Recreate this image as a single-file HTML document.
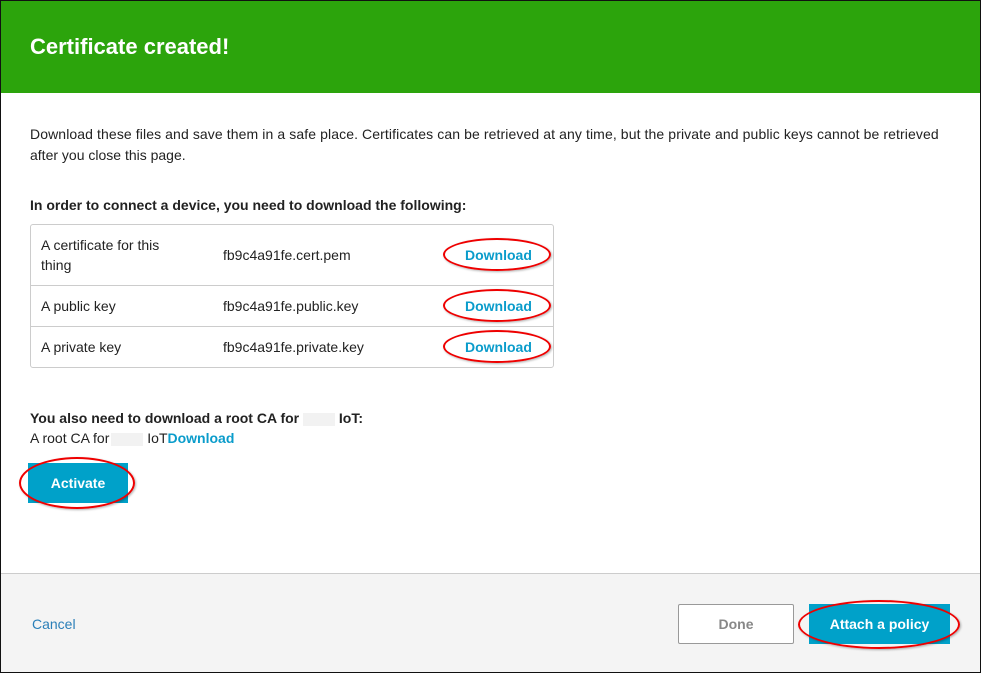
<!DOCTYPE html>
<html><head><style>
*{margin:0;padding:0;box-sizing:border-box}
body{width:981px;height:673px;position:relative;background:#fff;font-family:"Liberation Sans",sans-serif;color:#222;overflow:hidden}
.frame{position:absolute;left:0;top:0;width:981px;height:673px;border:1px solid #111}
.hdr{position:absolute;left:1px;top:1px;width:979px;height:92px;background:#2ca40c}
.hdr h1{position:absolute;left:29px;top:33px;font-size:22px;font-weight:bold;color:#fff}
.a{position:absolute;font-size:14px;white-space:nowrap}
.b{font-weight:bold}
.tbl{position:absolute;left:30px;top:224px;width:524px;height:144px;border:1px solid #ccc;border-radius:3px}
.ln{position:absolute;left:31px;width:522px;height:1px;background:#ccc}
.dl{color:#0a9ccb;font-weight:bold}
.ell{position:absolute;border:2px solid #e00;border-radius:50%;box-shadow:1px 1px 2px rgba(0,0,0,.3)}
.btn{position:absolute;background:#00a1c9;color:#fff;font-weight:bold;font-size:14px;text-align:center}
.foot{position:absolute;left:1px;top:573px;width:979px;height:99px;background:#f4f4f4;border-top:1px solid #ccc}
</style></head><body>
<div class="hdr"><h1>Certificate created!</h1></div>
<div class="a" style="left:30px;top:126px;letter-spacing:0.1px">Download these files and save them in a safe place. Certificates can be retrieved at any time, but the private and public keys cannot be retrieved</div>
<div class="a" style="left:30px;top:147px">after you close this page.</div>
<div class="a b" style="left:30px;top:197px">In order to connect a device, you need to download the following:</div>
<div class="tbl"></div>
<div class="ln" style="top:285px"></div>
<div class="ln" style="top:326px"></div>
<div class="a" style="left:41px;top:237px">A certificate for this</div>
<div class="a" style="left:41px;top:257px">thing</div>
<div class="a" style="left:223px;top:247px">fb9c4a91fe.cert.pem</div>
<div class="a dl" style="left:465px;top:247px">Download</div>
<div class="a" style="left:41px;top:298px">A public key</div>
<div class="a" style="left:223px;top:298px">fb9c4a91fe.public.key</div>
<div class="a dl" style="left:465px;top:298px">Download</div>
<div class="a" style="left:41px;top:339px">A private key</div>
<div class="a" style="left:223px;top:339px">fb9c4a91fe.private.key</div>
<div class="a dl" style="left:465px;top:339px">Download</div>
<div class="ell" style="left:443px;top:238px;width:108px;height:33px"></div>
<div class="ell" style="left:443px;top:289px;width:108px;height:33px"></div>
<div class="ell" style="left:443px;top:330px;width:108px;height:33px"></div>
<div class="a b" style="left:30px;top:410px">You also need to download a root CA for <span style="display:inline-block;width:32px;height:13px;background:#f2f2f2;vertical-align:middle"></span> IoT:</div>
<div class="a" style="left:30px;top:430px">A root CA for<span style="display:inline-block;width:32px;height:13px;background:#f2f2f2;vertical-align:middle;margin-left:2px"></span> IoT<span class="dl">Download</span></div>
<div class="btn" style="left:28px;top:463px;width:100px;height:40px;line-height:40px">Activate</div>
<div class="ell" style="left:19px;top:457px;width:116px;height:52px"></div>
<div class="foot"></div>
<div class="a" style="left:32px;top:616px;color:#2a7fb8">Cancel</div>
<div style="position:absolute;left:678px;top:604px;width:116px;height:40px;border:1px solid #999;border-radius:2px;background:#fff;color:#888;font-weight:bold;font-size:14px;text-align:center;line-height:38px">Done</div>
<div class="btn" style="left:809px;top:604px;width:141px;height:40px;line-height:40px">Attach a policy</div>
<div class="ell" style="left:798px;top:600px;width:162px;height:49px"></div>
<div class="frame"></div>
</body></html>
